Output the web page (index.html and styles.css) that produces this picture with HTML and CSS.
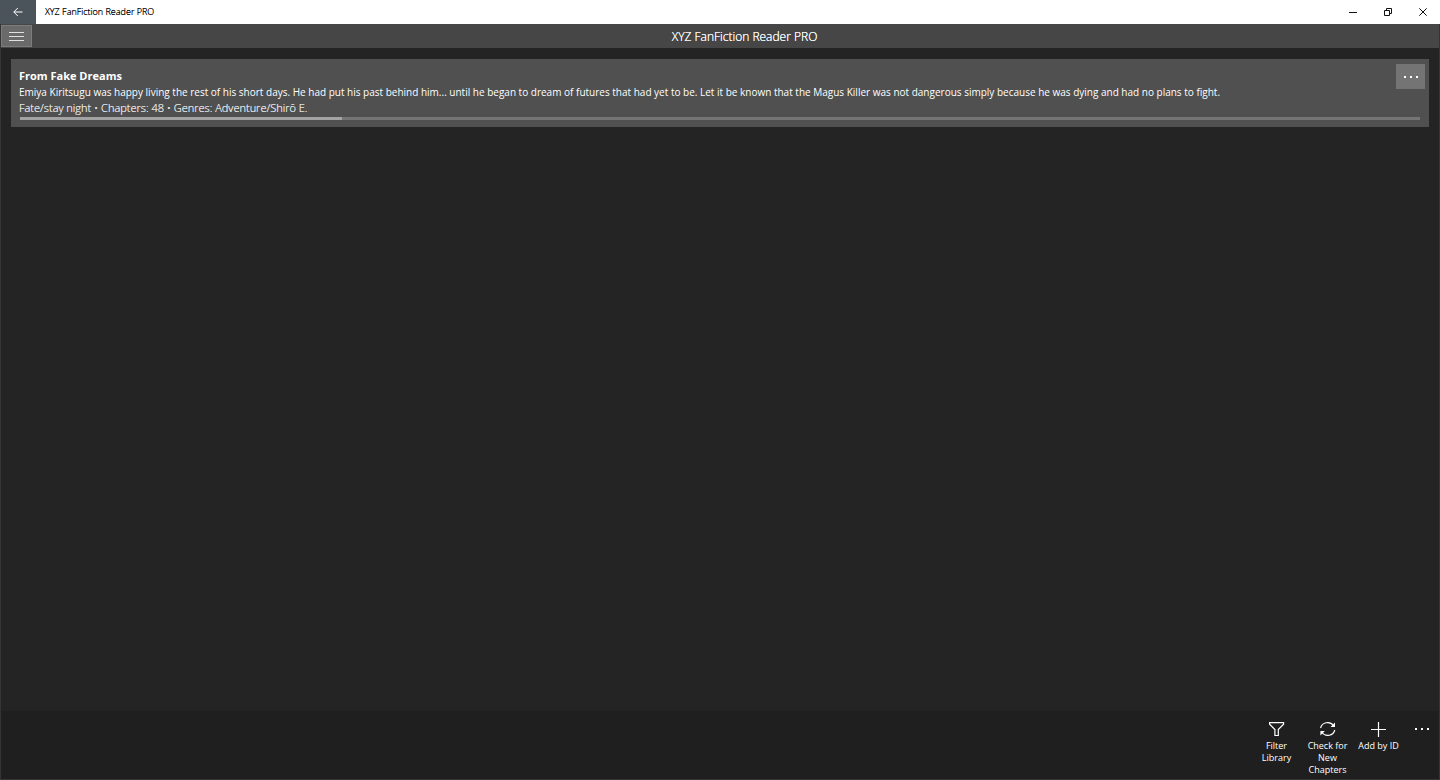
FILE: index.html
```html
<!DOCTYPE html>
<html lang="en">
<head>
    <meta charset="UTF-8">
    <meta name="viewport" content="width=device-width, initial-scale=1.0">
    <title>XYZ FanFiction Reader PRO</title>
    <link rel="stylesheet" href="styles.css">
</head>
<body>
    <div class="titlebar">
        <button type="button" class="back" aria-label="Back">
            <svg width="10" height="10" viewBox="0 0 10 10"><path d="M9.5 5H.8M4.8 1L.8 5l4 4"/></svg>
        </button>
        <span class="window-title">XYZ FanFiction Reader PRO</span>
        <div class="window-controls">
            <button type="button" aria-label="Minimize">
                <svg width="8" height="8" viewBox="0 0 8 8"><path d="M0 4.5h8"/></svg>
            </button>
            <button type="button" aria-label="Restore">
                <svg width="8" height="8" viewBox="0 0 8 8"><path d="M.5 2.5h5v5h-5zM2.5 2.5v-2h5v5h-2"/></svg>
            </button>
            <button type="button" aria-label="Close">
                <svg width="8" height="8" viewBox="0 0 8 8"><path d="M.3.3l7.4 7.4M7.7.3L.3 7.7"/></svg>
            </button>
        </div>
    </div>

    <div class="app">
        <header class="header">
            <button type="button" class="menu" aria-label="Menu">
                <svg width="15" height="9" viewBox="0 0 15 9"><path d="M0 .5h15M0 4.5h15M0 8.5h15"/></svg>
            </button>
            <h1>XYZ FanFiction Reader PRO</h1>
        </header>

        <main class="library">
            <article class="story">
                <div class="story-top">
                    <div class="story-text">
                        <h2>From Fake Dreams</h2>
                        <p class="summary">Emiya Kiritsugu was happy living the rest of his short days. He had put his past behind him... until he began to dream of futures that had yet to be. Let it be known that the Magus Killer was not dangerous simply because he was dying and had no plans to fight.</p>
                        <p class="details">Fate/stay night • Chapters: 48 • Genres: Adventure/Shirō E.</p>
                    </div>
                    <button type="button" class="story-more" aria-label="More options">
                        <svg width="14" height="2" viewBox="0 0 14 2"><path d="M0 0h2v2H0zM6 0h2v2H6zM12 0h2v2h-2z"/></svg>
                    </button>
                </div>
                <div class="progress"><div class="progress-bar" style="width: 23%"></div></div>
            </article>
        </main>

        <footer class="commands">
            <button type="button" class="command">
                <svg width="16" height="16" viewBox="0 0 16 16"><path d="M.6 1.6h14v1.600L9.300 8.500v6H5.900v-6L.6 3.200z"/></svg>
                <span>Filter Library</span>
            </button>
            <button type="button" class="command">
                <svg width="16" height="16" viewBox="0 0 16 16"><path d="M.6 7A7.200 6.800 0 0 1 13.500 4.500M14.800 9A7.200 6.800 0 0 1 1.900 11.500"/><path class="arrow" d="M15 1.500v4.500h-4.500zM.4 14.500V10h4.500z"/></svg>
                <span>Check for New Chapters</span>
            </button>
            <button type="button" class="command">
                <svg width="16" height="16" viewBox="0 0 16 16"><path d="M7.500 1v15M0 8.500h15"/></svg>
                <span>Add by ID</span>
            </button>
            <button type="button" class="commands-more" aria-label="See more">
                <svg width="14" height="2" viewBox="0 0 14 2"><path d="M0 0h2v2H0zM6 0h2v2H6zM12 0h2v2h-2z"/></svg>
            </button>
        </footer>
    </div>
</body>
</html>
```
FILE: styles.css
```css
* {
    box-sizing: border-box;
}

body {
    margin: 0;
    min-height: 100vh;
    display: flex;
    flex-direction: column;
    background: #242424;
    color: #fff;
    font-family: "Open Sans", "Noto Sans", sans-serif;
}

h1, h2, p {
    margin: 0;
}

button {
    display: flex;
    align-items: center;
    justify-content: center;
    margin: 0;
    padding: 0;
    border: none;
    background: none;
    color: inherit;
    font-family: inherit;
}

svg {
    display: block;
    fill: none;
    stroke: currentColor;
}

/* window title bar */
.titlebar {
    display: flex;
    height: 24px;
    background: #fff;
    color: #111;
}

.back {
    width: 36px;
    background: #4a545a;
    color: #fff;
}

.window-title {
    flex: 1;
    padding-left: 9px;
    color: #000;
    font-size: 9px;
    font-weight: 300;
    line-height: 24px;
    text-shadow: 0 0 currentColor;
}

.window-controls {
    display: flex;
}

.window-controls button {
    width: 35px;
}

/* app */
.app {
    flex: 1;
    display: flex;
    flex-direction: column;
    border: 1px solid #353535;
    border-top: none;
}

.header {
    display: flex;
    align-items: center;
    height: 24px;
    background: #464646;
}

.menu {
    width: 31px;
    height: 22px;
    border: 1px solid #7c7c7c;
    background: #6a6a6a;
    color: #e0e0e0;
}

.header h1 {
    flex: 1;
    padding: 2px 0 0 18px;
    font-size: 12px;
    font-weight: 300;
    line-height: 22px;
    text-align: center;
    text-shadow: 0 0 currentColor;
}

.library {
    flex: 1;
    padding: 11px 10px;
}

.story {
    padding: 5px 4px 7px 8px;
    background: #505050;
}

.story-top {
    display: flex;
    align-items: flex-start;
}

.story-text {
    flex: 1;
    padding-top: 4px;
    line-height: 16px;
}

.story h2 {
    font-size: 11px;
    font-weight: 700;
}

.summary {
    font-size: 10px;
}

.details {
    font-size: 11px;
    font-weight: 300;
    color: #e4e4e4;
    text-shadow: 0 0 currentColor;
}

.story-more {
    width: 29px;
    height: 25px;
    background: #747474;
}

.story-more svg,
.commands-more svg {
    fill: currentColor;
    stroke: none;
}

.progress {
    height: 3px;
    margin: 1px 5px 0 1px;
    background: #757575;
}

.progress-bar {
    height: 3px;
    background: #a3a3a3;
}

/* bottom command bar */
.commands {
    display: flex;
    justify-content: flex-end;
    align-items: flex-start;
    height: 68px;
    padding-top: 10px;
    background: #1f1f1f;
}

.command {
    flex-direction: column;
    width: 51px;
    padding: 0 4px;
    font-size: 9px;
    line-height: 12px;
    gap: 3px;
}

.command svg {
    stroke-width: 1.2;
}

.arrow {
    fill: currentColor;
    stroke: none;
}

.commands-more {
    width: 35px;
    height: 16px;
}
```
